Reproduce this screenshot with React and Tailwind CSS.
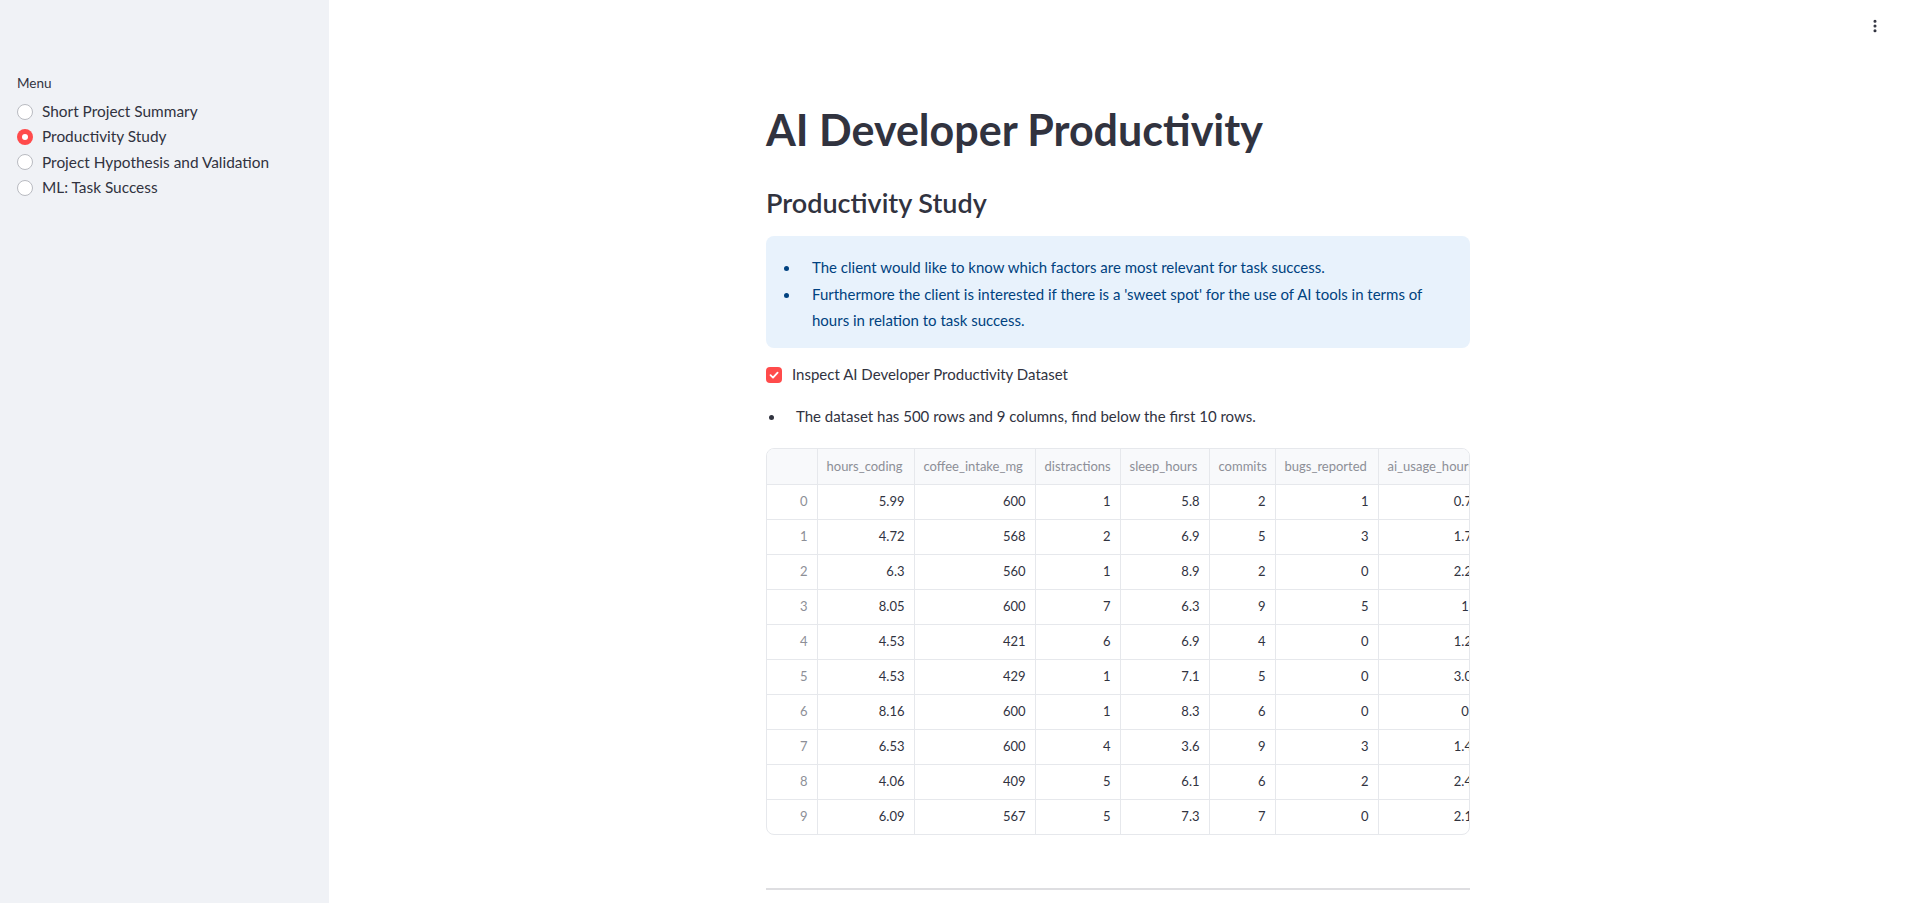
import { EllipsisVertical } from "lucide-react"

const menu = [
  "Short Project Summary",
  "Productivity Study",
  "Project Hypothesis and Validation",
  "ML: Task Success",
]

const columns = [
  { name: "hours_coding", w: "w-[97px]" },
  { name: "coffee_intake_mg", w: "w-[121px]" },
  { name: "distractions", w: "w-[85px]" },
  { name: "sleep_hours", w: "w-[89px]" },
  { name: "commits", w: "w-[66px]" },
  { name: "bugs_reported", w: "w-[103px]" },
  { name: "ai_usage_hours", w: "w-[111px]" },
  { name: "cognitive_load", w: "w-[104px]" },
  { name: "task_success", w: "w-[96px]" },
]

const rows = [
  ["5.99", "600", "1", "5.8", "2", "1", "0.71", "5.4", "1"],
  ["4.72", "568", "2", "6.9", "5", "3", "1.75", "4.7", "1"],
  ["6.3", "560", "1", "8.9", "2", "0", "2.27", "2.2", "1"],
  ["8.05", "600", "7", "6.3", "9", "5", "1.4", "5.9", "0"],
  ["4.53", "421", "6", "6.9", "4", "0", "1.26", "6.3", "1"],
  ["4.53", "429", "1", "7.1", "5", "0", "3.06", "3.9", "1"],
  ["8.16", "600", "1", "8.3", "6", "0", "0.3", "2.2", "1"],
  ["6.53", "600", "4", "3.6", "9", "3", "1.47", "9.1", "0"],
  ["4.06", "409", "5", "6.1", "6", "2", "2.43", "7", "0"],
  ["6.09", "567", "5", "7.3", "7", "0", "2.11", "5.1", "1"],
]

function Radio({ checked }) {
  if (checked) {
    return (
      <span className="w-4 h-4 rounded-full bg-[#ff4b4b] flex items-center justify-center shrink-0">
        <span className="w-[6px] h-[6px] rounded-full bg-white" />
      </span>
    )
  }
  return <span className="w-4 h-4 rounded-full bg-white border border-[#b9bbc1] shrink-0" />
}

function Sidebar() {
  return (
    <aside className="w-[329px] shrink-0 bg-[#f0f2f6] pt-[72px] pl-[17px]">
      <div className="text-[13.5px] leading-[22px] text-[#31333f]">Menu</div>
      <div className="mt-[5px] flex flex-col">
        {menu.map((item, i) => (
          <label key={item} className="h-[25.3px] flex items-center gap-[9px] text-[15.4px] text-[#31333f]">
            <Radio checked={i === 1} />
            <span>{item}</span>
          </label>
        ))}
      </div>
    </aside>
  )
}

function Bullet({ className }) {
  return (
    <div className="w-[30px] shrink-0">
      <div className={"w-[5px] h-[5px] rounded-full bg-current mt-[11px] " + className} />
    </div>
  )
}

function DataTable() {
  let cell = "border-r border-[#e6e8ec]"
  return (
    <div className="mt-[19px] border border-[#e6e8ec] rounded-lg overflow-hidden">
      <table className="table-fixed border-collapse text-[13px] w-[922px]">
        <thead>
          <tr className="h-[35px] bg-[#f8f9fb] text-[#8d8f97]">
            <th className={"w-[50px] border-b " + cell} />
            {columns.map(c => (
              <th key={c.name} className={c.w + " font-normal text-left pl-[9px] border-b whitespace-nowrap overflow-hidden " + cell}>
                {c.name}
              </th>
            ))}
          </tr>
        </thead>
        <tbody>
          {rows.map((r, i) => (
            <tr key={i} className="h-[35px]">
              <td className={"text-right pr-[9px] text-[#8d8f97] " + cell + (i < 9 ? " border-b" : "")}>{i}</td>
              {r.map((v, j) => (
                <td key={j} className={"text-right pr-[9px] text-[#31333f] " + cell + (i < 9 ? " border-b" : "")}>
                  {v}
                </td>
              ))}
            </tr>
          ))}
        </tbody>
      </table>
    </div>
  )
}

export default function App() {
  return (
    <div className="flex w-full h-[903px] overflow-hidden bg-white text-[#31333f] font-['Lato',sans-serif]">
      <Sidebar />
      <main className="flex-1 flex flex-col">
        <div className="flex justify-end pt-[18px] pr-[24px] h-[34px]">
          <EllipsisVertical size={16} strokeWidth={2.6} className="text-[#31333f]" />
        </div>
        <div className="w-[704px] mx-auto pt-[70px]">
          <h1 className="text-[43px] leading-[52.8px] font-bold">AI Developer Productivity</h1>
          <h3 className="mt-[29px] text-[27px] leading-[33.6px] font-semibold">Productivity Study</h3>
          <div className="mt-[17px] rounded-lg bg-[#e8f2fc] text-[#004280] pt-[19px] pb-[14px] px-4">
            <ul className="flex flex-col gap-[1.5px] text-[15px] leading-[25.6px]">
              <li className="flex">
                <Bullet className="ml-[2px]" />
                <span>The client would like to know which factors are most relevant for task success.</span>
              </li>
              <li className="flex">
                <Bullet className="ml-[2px]" />
                <span>Furthermore the client is interested if there is a 'sweet spot' for the use of AI tools in terms of hours in relation to task success.</span>
              </li>
            </ul>
          </div>
          <label className="mt-[15px] h-[24px] flex items-center gap-[10px] text-[15px]">
            <span className="w-4 h-4 rounded-[4px] bg-[#ff4b4b] flex items-center justify-center">
              <svg width="12" height="12" viewBox="0 0 12 12" fill="none">
                <path d="M2.5 6.2 L5 8.6 L9.6 3.6" stroke="white" strokeWidth="1.8" strokeLinecap="round" strokeLinejoin="round" />
              </svg>
            </span>
            <span>Inspect AI Developer Productivity Dataset</span>
          </label>
          <div className="mt-[17px] flex text-[15px] leading-[25.6px]">
            <Bullet className="ml-[3px]" />
            <span>The dataset has 500 rows and 9 columns, find below the first 10 rows.</span>
          </div>
          <DataTable />
          <div className="mt-[53px] h-[2px] bg-[#dedee1]" />
        </div>
      </main>
    </div>
  )
}
